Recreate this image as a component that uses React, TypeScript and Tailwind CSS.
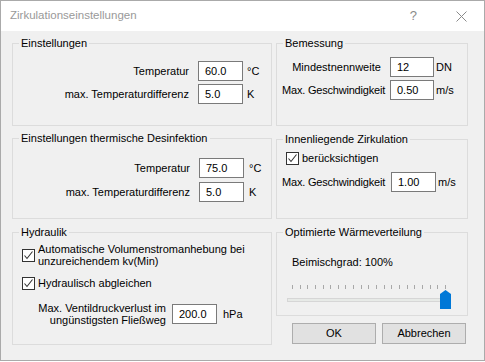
import type { ReactNode } from "react";

function Group({
  title,
  className,
  children,
}: {
  title: string;
  className: string;
  children?: ReactNode;
}) {
  return (
    <div className={`relative border border-[#dcdcdc] ${className}`}>
      <span className="absolute left-[6px] top-[-8px] bg-[#f0f0f0] px-[2px] leading-[14px] whitespace-nowrap">
        {title}
      </span>
      {children}
    </div>
  );
}

function Field({ value, width }: { value: string; width: string }) {
  return (
    <div
      className={`flex h-[20px] shrink-0 items-center border border-[#7a7a7a] bg-white pl-[6px] ${width}`}
    >
      {value}
    </div>
  );
}

function Check() {
  return (
    <div className="flex h-[13px] w-[13px] shrink-0 items-center justify-center border border-[#333333] bg-white">
      <svg width="11" height="11" viewBox="0 0 11 11">
        <path d="M1.5 5.5 L4 8.5 L9.5 1.5" fill="none" stroke="#333333" strokeWidth="1.1" />
      </svg>
    </div>
  );
}

const TICKS = Array.from({ length: 21 }, (_, i) => i);

export default function App() {
  return (
    <div className="h-[362px] w-[485px] bg-white font-['Liberation_Sans',Arial,sans-serif] text-[11px] text-black">
      <div className="flex h-[361px] w-[485px] flex-col border border-[#aaaaaa]">
        {/* title bar */}
        <div className="flex h-[30px] shrink-0 items-center bg-white pl-[9px] text-[11.5px] text-[#999999]">
          <span>Zirkulationseinstellungen</span>
          <span className="ml-auto mr-[39px] text-[13px] text-[#8a8a8a]">?</span>
          <svg className="mr-[17px]" width="11" height="11" viewBox="0 0 11 11">
            <path d="M0.5 0.5 L10.5 10.5 M10.5 0.5 L0.5 10.5" stroke="#8a8a8a" strokeWidth="1" />
          </svg>
        </div>

        {/* body */}
        <div className="flex flex-1 gap-[4px] bg-[#f0f0f0] pl-[11px] pt-[12px]">
          {/* left column */}
          <div className="flex w-[260px] flex-col">
            <Group title="Einstellungen" className="h-[83px] pt-[17px]">
              <div className="flex h-[20px] items-center">
                <span className="w-[176px] text-right">Temperatur</span>
                <div className="ml-[9px]">
                  <Field value="60.0" width="w-[45px]" />
                </div>
                <span className="ml-[4px]">°C</span>
              </div>
              <div className="mt-[3px] flex h-[20px] items-center">
                <span className="w-[176px] text-right">max. Temperaturdifferenz</span>
                <div className="ml-[9px]">
                  <Field value="5.0" width="w-[45px]" />
                </div>
                <span className="ml-[4px]">K</span>
              </div>
            </Group>

            <Group title="Einstellungen thermische Desinfektion" className="mt-[12px] h-[81px] pt-[19px]">
              <div className="flex h-[20px] items-center">
                <span className="w-[177px] text-right">Temperatur</span>
                <div className="ml-[9px]">
                  <Field value="75.0" width="w-[45px]" />
                </div>
                <span className="ml-[5px]">°C</span>
              </div>
              <div className="mt-[4px] flex h-[20px] items-center">
                <span className="w-[177px] text-right">max. Temperaturdifferenz</span>
                <div className="ml-[9px]">
                  <Field value="5.0" width="w-[45px]" />
                </div>
                <span className="ml-[5px]">K</span>
              </div>
            </Group>

            <Group title="Hydraulik" className="mt-[13px] h-[113px] pl-[9px] pt-[10px]">
              <div className="flex items-center">
                <Check />
                <div className="ml-[3px] leading-[12px]">
                  <div>Automatische Volumenstromanhebung bei</div>
                  <div>unzureichendem kv(Min)</div>
                </div>
              </div>
              <div className="mt-[10px] flex h-[13px] items-center">
                <Check />
                <span className="ml-[3px]">Hydraulisch abgleichen</span>
              </div>
              <div className="ml-[-9px] mt-[12px] flex items-center">
                <div className="w-[153px] text-right leading-[12px]">
                  <div>Max. Ventildruckverlust im</div>
                  <div>ungünstigsten Fließweg</div>
                </div>
                <div className="ml-[6px]">
                  <Field value="200.0" width="w-[45px]" />
                </div>
                <span className="ml-[6px]">hPa</span>
              </div>
            </Group>
          </div>

          {/* right column */}
          <div className="flex w-[192px] flex-col">
            <Group title="Bemessung" className="h-[83px] pt-[13px]">
              <div className="flex h-[20px] items-center pl-[6px]">
                <span className="w-[107px] text-center">Mindestnennweite</span>
                <Field value="12" width="w-[44px]" />
                <span className="ml-[2px]">DN</span>
              </div>
              <div className="mt-[3px] flex h-[20px] items-center pl-[5px]">
                <span className="w-[108px] whitespace-nowrap tracking-[-0.2px]">Max. Geschwindigkeit</span>
                <Field value="0.50" width="w-[44px]" />
                <span className="ml-[2px]">m/s</span>
              </div>
            </Group>

            <Group title="Innenliegende Zirkulation" className="mt-[13px] h-[80px] pt-[12px]">
              <div className="flex h-[13px] items-center pl-[9px]">
                <Check />
                <span className="ml-[3px]">berücksichtigen</span>
              </div>
              <div className="mt-[7px] flex h-[20px] items-center pl-[5px]">
                <span className="w-[109px] whitespace-nowrap tracking-[-0.2px]">Max. Geschwindigkeit</span>
                <Field value="1.00" width="w-[45px]" />
                <span className="ml-[2px]">m/s</span>
              </div>
            </Group>

            <Group title="Optimierte Wärmeverteilung" className="mt-[13px] h-[84px] pt-[22px]">
              <div className="pl-[15px] leading-[14px]">Beimischgrad: 100%</div>
              <div className="relative ml-[10px] mt-[16px] h-[25px] w-[164px]">
                <div className="mx-[5px] flex h-[4px] justify-between">
                  {TICKS.map((t) => (
                    <div key={t} className="h-[4px] w-[1px] bg-[#a8a8a8]" />
                  ))}
                </div>
                <div className="mt-[9px] h-[4px] border border-[#d6d6d6] bg-[#e7eae7]" />
                <svg className="absolute right-0 top-[5px]" width="11" height="19" viewBox="0 0 11 19">
                  <path d="M0 4 L5.5 0 L11 4 L11 19 L0 19 Z" fill="#0078d7" />
                </svg>
              </div>
            </Group>

            <div className="ml-[16px] mt-[7px] flex gap-[6px]">
              <button className="flex h-[21px] w-[84px] items-center justify-center border border-[#adadad] bg-[#e1e1e1]">
                OK
              </button>
              <button className="flex h-[21px] w-[84px] items-center justify-center border border-[#adadad] bg-[#e1e1e1]">
                Abbrechen
              </button>
            </div>
          </div>
        </div>
      </div>
    </div>
  );
}
